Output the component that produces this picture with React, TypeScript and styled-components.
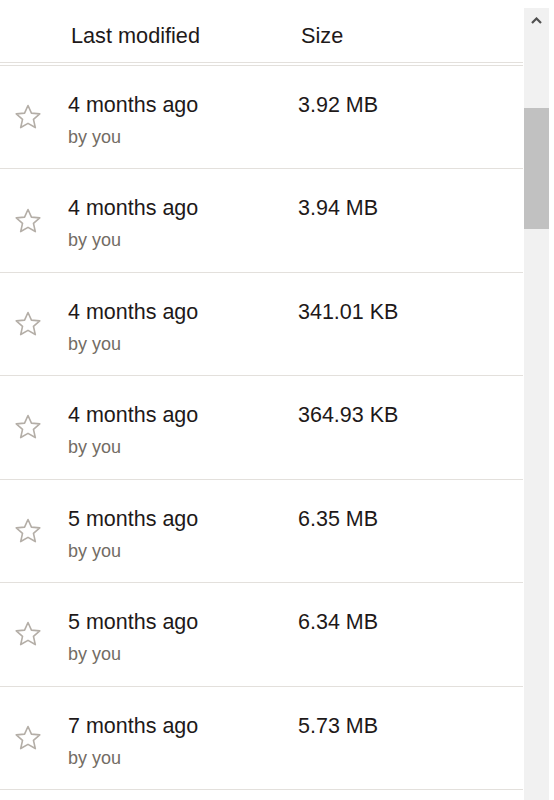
import React from 'react';
import styled, { createGlobalStyle } from 'styled-components';

const GlobalStyle = createGlobalStyle`
  html, body {
    margin: 0;
    padding: 0;
    background: #ffffff;
  }
  body {
    font-family: "Liberation Sans", Arial, sans-serif;
    color: #1e1919;
  }
`;

const Page = styled.div`
  display: flex;
  width: 554px;
  height: 800px;
  overflow: hidden;
  background: #ffffff;
`;

const Table = styled.div`
  width: 523px;
  flex-shrink: 0;
`;

const HeaderRow = styled.div`
  display: grid;
  grid-template-columns: 71px 230px 1fr;
  height: 63px;
  box-sizing: border-box;
  padding-top: 22px;
  border-bottom: 1px solid #e3e0dc;
`;

const HeaderCell = styled.div`
  font-size: 21.7px;
  line-height: 28px;
  color: #1e1919;
`;

const Body = styled.div`
  margin-top: 2px;
  border-top: 1px solid #e3e0dc;
`;

const Row = styled.div`
  display: grid;
  grid-template-columns: 68px 230px 1fr;
  height: 103.43px;
  box-sizing: border-box;
  border-bottom: 1px solid #e3e0dc;
`;

const StarCell = styled.div`
  display: flex;
  align-items: center;
  justify-content: center;
  padding-right: 12px;
`;

const TextCell = styled.div`
  padding-top: 25px;
`;

const Primary = styled.div`
  font-size: 21.5px;
  line-height: 28px;
  color: #1e1919;
`;

const Secondary = styled.div`
  margin-top: 6px;
  font-size: 18px;
  line-height: 24px;
  color: #736c64;
`;

const Scrollbar = styled.div`
  width: 25px;
  margin-top: 8px;
  margin-left: 1px;
  background: #f1f1f1;
  display: flex;
  flex-direction: column;
  align-items: center;
  flex-shrink: 0;
`;

const ArrowButton = styled.div`
  height: 25px;
  width: 100%;
  display: flex;
  align-items: center;
  justify-content: center;
`;

const Thumb = styled.div<{ $top: number; $height: number }>`
  width: 100%;
  margin-top: ${({ $top }) => $top}px;
  height: ${({ $height }) => $height}px;
  background: #c1c1c1;
`;

const Star = () => (
  <svg width="30" height="30" viewBox="0 0 24 24" fill="none">
    <path
      d="M12 2.8l2.75 6.1 6.65.62-5.03 4.42 1.48 6.52L12 17.1l-5.85 3.36 1.48-6.52L2.6 9.52l6.65-.62z"
      stroke="#b4aea7"
      strokeWidth="1.3"
      strokeLinejoin="round"
    />
  </svg>
);

const files = [
  { when: '4 months ago', size: '3.92 MB' },
  { when: '4 months ago', size: '3.94 MB' },
  { when: '4 months ago', size: '341.01 KB' },
  { when: '4 months ago', size: '364.93 KB' },
  { when: '5 months ago', size: '6.35 MB' },
  { when: '5 months ago', size: '6.34 MB' },
  { when: '7 months ago', size: '5.73 MB' },
];

const App: React.FC = () => {
  return (
    <>
      <GlobalStyle />
      <Page>
        <Table>
          <HeaderRow>
            <div />
            <HeaderCell>Last modified</HeaderCell>
            <HeaderCell>Size</HeaderCell>
          </HeaderRow>
          <Body>
            {files.map((f, i) => (
              <Row key={i}>
                <StarCell>
                  <Star />
                </StarCell>
                <TextCell>
                  <Primary>{f.when}</Primary>
                  <Secondary>by you</Secondary>
                </TextCell>
                <TextCell>
                  <Primary>{f.size}</Primary>
                </TextCell>
              </Row>
            ))}
          </Body>
        </Table>
        <Scrollbar>
          <ArrowButton>
            <svg width="11" height="7" viewBox="0 0 11 7">
              <path d="M1 6L5.5 1.5 10 6" stroke="#505050" strokeWidth="2.2" fill="none" />
            </svg>
          </ArrowButton>
          <Thumb $top={75} $height={121} />
        </Scrollbar>
      </Page>
    </>
  );
};

export default App;
